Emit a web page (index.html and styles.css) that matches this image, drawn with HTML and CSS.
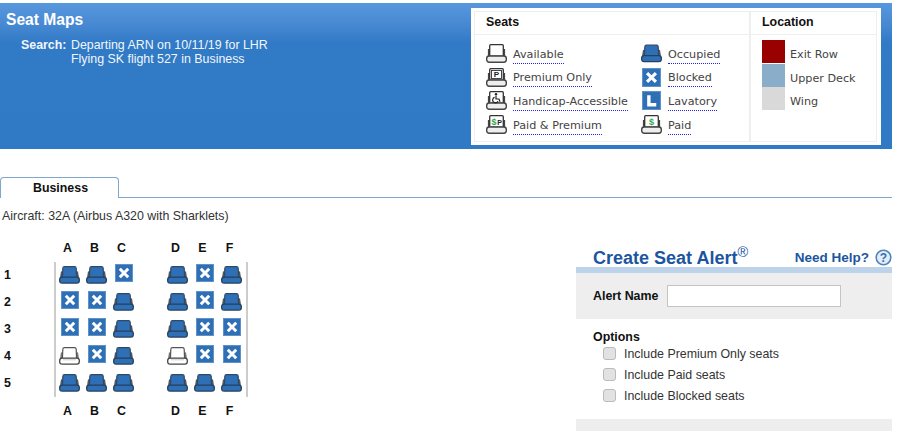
FILE: index.html
```html
<!DOCTYPE html>
<html lang="en">
<head>
<meta charset="utf-8">
<title>Seat Maps</title>
<link rel="stylesheet" href="styles.css">
</head>
<body>
<svg class="defs" xmlns="http://www.w3.org/2000/svg">
  <symbol id="occ" viewBox="0 0 21 18">
    <path d="M3 5.5 2 12M18 5.5l1 6.5" stroke="#555" stroke-width="2" fill="none"/>
    <path d="M3.4 12 3.8 2.4Q3.9 .7 5.4 .7H15.6Q17.1 .7 17.2 2.4L17.6 12Z" fill="#2e6fb5" stroke="#2f4a68" stroke-width="1.2"/>
    <rect x=".7" y="11.2" width="19.6" height="5.9" rx="2.4" fill="#2e6fb5" stroke="#24405f" stroke-width="1.3"/>
  </symbol>
  <symbol id="avail" viewBox="0 0 21 18">
    <path d="M3 5.5 2 12M18 5.5l1 6.5" stroke="#777" stroke-width="2" fill="none"/>
    <path d="M3.4 12 3.8 2.4Q3.9 .7 5.4 .7H15.6Q17.1 .7 17.2 2.4L17.6 12Z" fill="#fff" stroke="#555" stroke-width="1.2"/>
    <rect x=".7" y="11.2" width="19.6" height="5.9" rx="2.4" fill="#fff" stroke="#444" stroke-width="1.3"/>
    <path d="M4 12.8H17" stroke="#ccc"/>
  </symbol>
  <symbol id="blocked" viewBox="0 0 18 18">
    <rect x=".5" y=".5" width="17" height="17" fill="#2e6fb5" stroke="#5f93c8"/>
    <path d="M4.8 4.8 13.2 13.2M13.2 4.8 4.8 13.2" stroke="#fff" stroke-width="3"/>
  </symbol>
  <symbol id="lav" viewBox="0 0 18 18">
    <rect x=".5" y=".5" width="17" height="17" fill="#2e6fb5" stroke="#5f93c8"/>
    <path d="M6.5 4V13H13.5" stroke="#fff" stroke-width="3.2" fill="none"/>
  </symbol>
  <symbol id="base" viewBox="0 0 21 19">
    <path d="M2.8 5V12.5M18.2 5V12.5" stroke="#444" stroke-width="1.8" fill="none"/>
    <rect x="3.7" y=".7" width="13.6" height="11.5" rx="1" fill="#fff" stroke="#333" stroke-width="1.3"/>
    <rect x=".7" y="12" width="19.6" height="6.2" rx="2.4" fill="#eee" stroke="#444" stroke-width="1.4"/>
  </symbol>
</svg>

<header class="banner">
  <div class="banner-info">
    <h1 class="title">Seat Maps</h1>
    <div class="search">
      <span class="search-label">Search:</span>
      <p class="search-text">Departing ARN on 10/11/19 for LHR<br>Flying SK flight 527 in Business</p>
    </div>
  </div>
  <section class="legend">
    <div class="legend-frame">
      <div class="legend-seats">
        <h2 class="legend-head">Seats</h2>
        <div class="legend-items">
          <div class="key"><svg class="key-seat"><use href="#base"/></svg><a class="dotted">Available</a></div>
          <div class="key"><svg class="key-seat"><use href="#occ"/></svg><a class="dotted">Occupied</a></div>
          <div class="key"><svg class="key-seat" viewBox="0 0 21 19"><use href="#base" width="21" height="19"/><rect class="mark-box" x="5.5" y="2.5" width="10" height="8"/><text class="mark" x="10.5" y="9.3">P</text></svg><a class="dotted">Premium Only</a></div>
          <div class="key"><svg class="key-square"><use href="#blocked"/></svg><a class="dotted">Blocked</a></div>
          <div class="key"><svg class="key-seat" viewBox="0 0 21 19"><use href="#base" width="21" height="19"/><circle cx="10" cy="3.2" r="1.2" fill="#222"/><path d="M10 4.8V8H13L14 10.8M8.6 6.4A2.8 2.8 0 1 0 12 10.2" stroke="#222" stroke-width="1.2" fill="none"/></svg><a class="dotted">Handicap-Accessible</a></div>
          <div class="key"><svg class="key-square"><use href="#lav"/></svg><a class="dotted">Lavatory</a></div>
          <div class="key"><svg class="key-seat" viewBox="0 0 21 19"><use href="#base" width="21" height="19"/><text class="mark-money" x="8" y="9.8">$</text><text class="mark-small" x="13.6" y="9.8">P</text></svg><a class="dotted">Paid &amp; Premium</a></div>
          <div class="key"><svg class="key-seat" viewBox="0 0 21 19"><use href="#base" width="21" height="19"/><text class="mark-money" x="10.5" y="9.8">$</text></svg><a class="dotted">Paid</a></div>
        </div>
      </div>
      <div class="legend-location">
        <h2 class="legend-head">Location</h2>
        <div class="loc-items">
          <div class="loc"><span class="swatch swatch-exit"></span><span class="loc-name">Exit Row</span></div>
          <div class="loc"><span class="swatch swatch-upper"></span><span class="loc-name">Upper Deck</span></div>
          <div class="loc"><span class="swatch swatch-wing"></span><span class="loc-name">Wing</span></div>
        </div>
      </div>
    </div>
  </section>
</header>

<nav class="tabs"><span class="tab">Business</span></nav>
<p class="aircraft">Aircraft: 32A (Airbus A320 with Sharklets)</p>

<main class="content">
  <section class="seatmap">
    <div class="letters">
      <span>A</span><span>B</span><span>C</span><span></span><span>D</span><span>E</span><span>F</span>
    </div>
    <div class="map">
      <div class="rownums"><span>1</span><span>2</span><span>3</span><span>4</span><span>5</span></div>
      <div class="cabin">
        <span class="c s"><svg class="seat"><use href="#occ"/></svg></span>
        <span class="c s"><svg class="seat"><use href="#occ"/></svg></span>
        <span class="c"><svg class="block"><use href="#blocked"/></svg></span>
        <span class="c"></span>
        <span class="c s"><svg class="seat"><use href="#occ"/></svg></span>
        <span class="c"><svg class="block"><use href="#blocked"/></svg></span>
        <span class="c s"><svg class="seat"><use href="#occ"/></svg></span>

        <span class="c"><svg class="block"><use href="#blocked"/></svg></span>
        <span class="c"><svg class="block"><use href="#blocked"/></svg></span>
        <span class="c s"><svg class="seat"><use href="#occ"/></svg></span>
        <span class="c"></span>
        <span class="c s"><svg class="seat"><use href="#occ"/></svg></span>
        <span class="c"><svg class="block"><use href="#blocked"/></svg></span>
        <span class="c s"><svg class="seat"><use href="#occ"/></svg></span>

        <span class="c"><svg class="block"><use href="#blocked"/></svg></span>
        <span class="c"><svg class="block"><use href="#blocked"/></svg></span>
        <span class="c s"><svg class="seat"><use href="#occ"/></svg></span>
        <span class="c"></span>
        <span class="c s"><svg class="seat"><use href="#occ"/></svg></span>
        <span class="c"><svg class="block"><use href="#blocked"/></svg></span>
        <span class="c"><svg class="block"><use href="#blocked"/></svg></span>

        <span class="c s"><svg class="seat"><use href="#avail"/></svg></span>
        <span class="c"><svg class="block"><use href="#blocked"/></svg></span>
        <span class="c s"><svg class="seat"><use href="#occ"/></svg></span>
        <span class="c"></span>
        <span class="c s"><svg class="seat"><use href="#avail"/></svg></span>
        <span class="c"><svg class="block"><use href="#blocked"/></svg></span>
        <span class="c"><svg class="block"><use href="#blocked"/></svg></span>

        <span class="c s"><svg class="seat"><use href="#occ"/></svg></span>
        <span class="c s"><svg class="seat"><use href="#occ"/></svg></span>
        <span class="c s"><svg class="seat"><use href="#occ"/></svg></span>
        <span class="c"></span>
        <span class="c s"><svg class="seat"><use href="#occ"/></svg></span>
        <span class="c s"><svg class="seat"><use href="#occ"/></svg></span>
        <span class="c s"><svg class="seat"><use href="#occ"/></svg></span>
      </div>
    </div>
    <div class="letters letters-bottom">
      <span>A</span><span>B</span><span>C</span><span></span><span>D</span><span>E</span><span>F</span>
    </div>
  </section>

  <aside class="alert">
    <div class="alert-top">
      <h2 class="alert-title">Create Seat Alert<sup class="reg">®</sup></h2>
      <a class="help">Need Help?<svg class="help-icon" viewBox="0 0 17 17"><circle cx="8.5" cy="8.5" r="7.3" fill="#e4eef8" stroke="#4f86bd" stroke-width="1.6"/><text class="help-q" x="8.5" y="12.6">?</text></svg></a>
    </div>
    <div class="alert-name">
      <label class="alert-label" for="alert-name">Alert Name</label>
      <input class="alert-input" id="alert-name" type="text">
    </div>
    <div class="options">
      <h3 class="options-head">Options</h3>
      <label class="opt"><input class="check" type="checkbox">Include Premium Only seats</label>
      <label class="opt"><input class="check" type="checkbox">Include Paid seats</label>
      <label class="opt"><input class="check" type="checkbox">Include Blocked seats</label>
    </div>
    <div class="alert-foot"></div>
  </aside>
</main>
</body>
</html>
```

FILE: styles.css
```css
* { box-sizing: border-box; }
html, body { height: 431px; overflow: hidden; }
body {
  margin: 0;
  padding-top: 3px;
  background: #fff;
  font-family: "Liberation Sans", Arial, sans-serif;
  font-size: 12.4px;
  color: #222;
}
.defs { display: none; }

/* banner */
.banner {
  width: 892px;
  height: 146px;
  display: flex;
  justify-content: space-between;
  align-items: flex-start;
  padding: 5px 11px 0 0;
  color: #f2f6fb;
  background: linear-gradient(#5798de 0, #4788d2 22px, #317ac6 40px, #3079c4 100%);
}
.banner-info { padding-left: 6px; }
.title {
  margin: 3px 0 10px;
  font-size: 15.6px;
  line-height: 17px;
  font-weight: bold;
  color: #fff;
}
.search { display: flex; padding-left: 15px; }
.search-label { width: 50px; font-weight: bold; line-height: 14px; }
.search-text { margin: 0; line-height: 14px; }

/* legend */
.legend {
  width: 410px;
  height: 137px;
  padding: 3px 4px 3px 3px;
  background: #fff;
  color: #444;
  font-family: "DejaVu Sans", Verdana, sans-serif;
  font-size: 11.2px;
}
.legend-frame {
  display: flex;
  height: 100%;
  border: 1px solid #eee;
}
.legend-seats { width: 276px; border-right: 2px solid #eee; }
.legend-location { flex: 1; }
.legend-head {
  margin: 0;
  height: 23px;
  padding: 3px 0 0 11px;
  border-bottom: 1px solid #eee;
  font-family: "Liberation Sans", Arial, sans-serif;
  font-size: 12.4px;
  line-height: 15px;
  font-weight: bold;
  color: #111;
}
.legend-items {
  display: grid;
  grid-template-columns: 155px 1fr;
  grid-auto-rows: 23.6px;
  padding: 7px 0 0 11px;
}
.key { display: flex; align-items: center; gap: 6px; }
.key-seat { width: 21px; height: 19px; flex: none; }
.key-square { width: 19px; height: 19px; margin: 0 1px; flex: none; }
.dotted {
  line-height: 14px;
  padding-bottom: 1px;
  border-bottom: 1px dotted #22f;
  position: relative;
  top: 2px;
}
.mark-box { fill: #fff; stroke: #333; stroke-width: .9; }
.mark { font: bold 8px "Liberation Sans", sans-serif; fill: #222; text-anchor: middle; }
.mark-small { font: bold 7px "Liberation Sans", sans-serif; fill: #222; text-anchor: middle; }
.mark-money { font: bold 9px "Liberation Sans", sans-serif; fill: #2aa84a; text-anchor: middle; }

.loc-items { padding: 5px 0 0 11px; }
.loc { display: flex; align-items: flex-start; gap: 5px; height: 23.6px; }
.loc-name { margin-top: 8px; line-height: 14px; }
.swatch { width: 23px; height: 23px; flex: none; }
.swatch-exit { background: #990000; }
.swatch-upper { background: #8aaec9; }
.swatch-wing { background: #d9d9d9; }

/* tabs */
.tabs {
  width: 892px;
  height: 21px;
  margin-top: 28px;
  border-bottom: 1px solid #7fa6cc;
}
.tab {
  display: block;
  width: 119px;
  height: 21px;
  padding: 3px 0 0 2px;
  border: 1px solid #7fa6cc;
  border-bottom: 0;
  border-radius: 4px 4px 0 0;
  background: #fff;
  text-align: center;
  font-weight: bold;
  line-height: 15px;
  color: #111;
}
.aircraft { margin: 11px 0 0 2px; line-height: 15px; color: #333; }

/* seat map */
.content { display: flex; align-items: flex-start; width: 892px; }
.seatmap { width: 576px; padding-top: 17px; flex: none; }
.letters {
  display: grid;
  grid-template-columns: repeat(7, 27px);
  margin-left: 54px;
  height: 14px;
  text-align: center;
  font-weight: bold;
  line-height: 14px;
  color: #111;
}
.letters-bottom { margin-top: 7px; }
.map { display: flex; margin-top: 7px; }
.rownums { width: 54px; display: grid; grid-auto-rows: 27px; padding-left: 4px; font-weight: bold; color: #111; line-height: 27px; }
.cabin {
  width: 194px;
  height: 135px;
  display: grid;
  grid-template-columns: repeat(7, 27px);
  grid-auto-rows: 27px;
  border-left: 2px solid #ccc;
  border-right: 2px solid #ccc;
}
.c { display: flex; justify-content: center; padding-top: 2px; }
.s { padding-top: 4px; }
.seat { width: 21px; height: 18px; }
.block { width: 18px; height: 18px; }

/* alert panel */
.alert { width: 316px; flex: none; padding-top: 17px; }
.alert-top {
  display: flex;
  justify-content: space-between;
  align-items: flex-start;
  height: 26px;
  padding: 6px 0 0 17px;
}
.alert-title { margin: 0; font-size: 18px; line-height: 22px; font-weight: bold; color: #1c559f; }
.reg { font-size: 14.5px; font-weight: normal; line-height: 0; }
.help { display: flex; align-items: center; gap: 6px; height: 20px; font-size: 13.5px; font-weight: bold; color: #1c559f; }
.help-icon { width: 17px; height: 17px; }
.help-q { font: bold 12px "Liberation Sans", sans-serif; fill: #2f6fae; text-anchor: middle; }
.alert-name {
  display: flex;
  align-items: center;
  gap: 9px;
  height: 52px;
  padding: 0 0 0 17px;
  border-top: 6px solid #bcd3ea;
  background: #eee;
}
.alert-label { font-weight: bold; color: #111; }
.alert-input { width: 174px; height: 22px; margin: 0; border: 1px solid #c4c4c4; background: #fff; padding: 0; }
.options { padding: 11px 0 0 17px; height: 100px; }
.options-head { margin: 0 0 -1px; font-size: 12.4px; line-height: 14px; font-weight: bold; color: #111; }
.opt { display: flex; align-items: center; gap: 8px; height: 21px; padding-left: 10px; color: #333; }
.check {
  appearance: none;
  width: 13px;
  height: 13px;
  margin: 0;
  border: 1px solid #bbb;
  border-radius: 3px;
  background: #e2e2e2;
}
.alert-foot { height: 14px; background: #eee; }
```
